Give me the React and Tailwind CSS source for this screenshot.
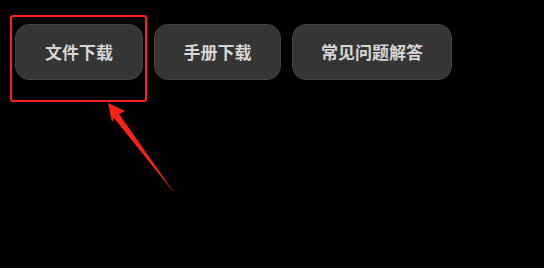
import React from "react";

const buttons = [
  { label: "文件下载", width: "w-[128px]" },
  { label: "手册下载", width: "w-[127px]" },
  { label: "常见问题解答", width: "w-[160px]" },
];

const App = () => {
  return (
    <div
      className="relative w-[544px] h-[268px] bg-black overflow-hidden"
      style={{ fontFamily: '"Noto Sans CJK SC", "Noto Sans", sans-serif' }}
    >
      <div className="flex gap-[11px] pl-[15px] pt-[24px]">
        {buttons.map((b) => (
          <button
            key={b.label}
            className={`${b.width} h-[56px] rounded-[14px] bg-[#353535] border border-[#454545] text-[#d6d6d6] text-[17px] font-bold shadow-[0_1px_2px_rgba(0,0,0,0.6)]`}
          >
            {b.label}
          </button>
        ))}
      </div>

      {/* highlight box */}
      <div className="absolute left-[10px] top-[15px] w-[137px] h-[87px] border-2 border-[#ff2116] rounded-[3px]" />

      {/* arrow */}
      <svg
        className="absolute left-0 top-0"
        width="544"
        height="268"
        viewBox="0 0 544 268"
      >
        <polygon
          points="108,103 125,111 119,114 175,194 114,118 112,122"
          fill="#ff2116"
        />
      </svg>
    </div>
  );
};

export default App;
